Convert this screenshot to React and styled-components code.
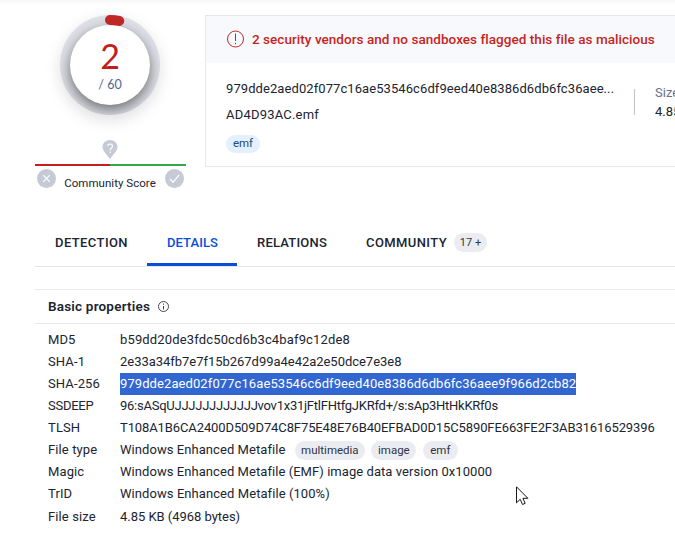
import React from 'react';
import styled, { createGlobalStyle } from 'styled-components';

const GlobalStyle = createGlobalStyle`
  *, *::before, *::after { box-sizing: border-box; }
  body { margin: 0; background: #fff; overflow: hidden; }
`;

const Page = styled.main`
  position: relative;
  width: 675px;
  height: 541px;
  overflow: hidden;
  padding: 15px 0 0 35px;
  background: linear-gradient(#f7f7f7, #fff 5px);
  color: #202430;
  font: 400 13px/22px Roboto, sans-serif;
`;

const Text = styled.span`
  letter-spacing: ${({ $ls = 0 }) => $ls}px;
  white-space: nowrap;
`;

const Summary = styled.section`
  display: flex;
  gap: 19px;
  height: 152px;
`;

const ScoreColumn = styled.div`
  display: flex;
  flex-direction: column;
  align-items: center;
  flex: 0 0 151px;
`;

const Gauge = styled.div`
  position: relative;
  flex: none;
  width: 100px;
  height: 100px;
  margin-right: 1px;
  border-radius: 50%;
  background: #dfe1e8;
  box-shadow: 0 5px 16px rgba(0, 0, 0, 0.13);
`;

const GaugeShade = styled.div`
  display: grid;
  place-items: center;
  width: 100px;
  height: 100px;
  border-radius: 50%;
  overflow: hidden;
`;

const GaugeFace = styled.div`
  display: flex;
  flex-direction: column;
  align-items: center;
  width: 80px;
  height: 80px;
  padding-top: 13px;
  border-radius: 50%;
  background: #fff;
  box-shadow: 0 5px 14px rgba(0, 0, 0, 0.52);
`;

const GaugeArc = styled.svg`
  position: absolute;
  inset: 0;
`;

const Hits = styled.div`
  color: #c41e1c;
  font: 400 34px/36px Lato, sans-serif;
`;

const Total = styled.div`
  margin-top: 3px;
  color: #52648c;
  font: 400 12.5px/16px Lato, sans-serif;
`;

const Pin = styled.svg`
  flex: none;
  margin: 24px 1px 0 0;
`;

const VoteBar = styled.div`
  flex: none;
  width: 151px;
  height: 2px;
  margin-top: 5px;
  background: linear-gradient(90deg, #c4201f 50%, #36a84a 50%);
`;

const Votes = styled.div`
  display: flex;
  justify-content: space-between;
  align-items: flex-start;
  width: 147px;
  margin-right: 1px;
  padding-top: 3px;
  font-size: 11.5px;
`;

const VoteIcon = styled.svg`
  flex: none;
`;

const VoteLabel = styled(Text)`
  margin-top: 3px;
`;

const Card = styled.article`
  flex: 1;
  min-width: 0;
  border: 1px solid #e4e7ef;
  border-right: 0;
  overflow: hidden;
  background: #fff;
`;

const Alert = styled.header`
  display: flex;
  align-items: center;
  gap: 8px;
  height: 47px;
  padding: 0 0 1px 20px;
  background: #f8f9fc;
  color: #c42523;
  font-size: 13.5px;
  font-weight: 500;
`;

const CardBody = styled.div`
  display: flex;
  padding: 15px 0 0 20px;
`;

const FileInfo = styled.div`
  display: flex;
  flex-direction: column;
  align-items: flex-start;
  gap: 4px;
  flex: 0 0 408px;
`;

const SizeBlock = styled.div`
  display: flex;
  align-items: center;
  gap: 20px;
  height: 26px;
  margin-top: 11px;
  border-left: 1px solid #bfc2c8;
  padding-left: 20px;
`;

const SizeText = styled.div`
  display: flex;
  flex-direction: column;
  line-height: 19px;
`;

const Muted = styled(Text)`
  color: #697288;
`;

const Tag = styled.span`
  display: inline-flex;
  align-items: center;
  justify-content: center;
  width: ${({ $w }) => $w}px;
  height: ${({ $blue }) => ($blue ? 18 : 19)}px;
  border-radius: 10px;
  background: ${({ $blue }) => ($blue ? '#e3f1fe' : '#ebecf2')};
  color: ${({ $blue }) => ($blue ? '#25487a' : '#303443')};
  font-size: 11.5px;
  line-height: 17px;
  padding-bottom: ${({ $blue }) => ($blue ? 1 : 0)}px;
  white-space: nowrap;
`;

const FileTag = styled(Tag)`
  margin-top: 5px;
`;

const Tabs = styled.nav`
  display: flex;
  height: 48px;
  margin-top: 52px;
  border-bottom: 1px solid #e3e6ed;
`;

const Tab = styled.a`
  display: flex;
  align-items: center;
  gap: 7px;
  width: ${({ $w }) => $w}px;
  height: 47px;
  padding: 3px 0 0 20px;
  font-weight: 500;
  color: ${({ $active }) => ($active ? '#0b4dda' : '#202430')};
  border-bottom: 3px solid ${({ $active }) => ($active ? '#0b4dda' : 'transparent')};
`;

const CountTag = styled(Tag)`
  font-weight: 400;
  font-size: 11px;
`;

const Panel = styled.section`
  margin-top: 22px;
  border-top: 1px solid #e7e9ee;
`;

const PanelHead = styled.header`
  display: flex;
  align-items: center;
  gap: 8px;
  height: 34px;
  padding-left: 13px;
  border-bottom: 1px solid #e7e9ee;
  font-size: 13.5px;
  line-height: 20px;
  font-weight: 600;
`;

const PanelTitle = styled(Text)`
  padding-bottom: 2px;
`;

const Properties = styled.dl`
  display: flex;
  flex-direction: column;
  margin: 0;
  padding: 5px 0 0 13px;
`;

const Property = styled.div`
  display: grid;
  grid-template-columns: 72px 1fr;
  height: 22px;
  margin-top: ${({ $last }) => ($last ? 1 : 0)}px;
`;

const Value = styled.dd`
  display: flex;
  align-items: center;
  margin: 0;
`;

const Label = styled.dt`
  white-space: nowrap;
`;

const Selected = styled(Text)`
  background: #3267d1;
  color: #fff;
  width: 456px;
`;

const TagList = styled.span`
  display: flex;
  gap: 6.5px;
  margin: 0 0 0 9.5px;
`;

const Cursor = styled.svg`
  position: absolute;
  left: 516px;
  top: 486px;
`;

const properties = [
  { label: 'MD5', value: 'b59dd20de3fdc50cd6b3c4baf9c12de8', ls: 0.15 },
  { label: 'SHA-1', value: '2e33a34fb7e7f15b267d99a4e42a2e50dce7e3e8', ls: -0.03 },
  { label: 'SHA-256', value: '979dde2aed02f077c16ae53546c6df9eed40e8386d6db6fc36aee9f966d2cb82', ls: 0.09, selected: true },
  { label: 'SSDEEP', labelLs: -0.25, value: '96:sASqUJJJJJJJJJJJJvov1x31jFtlFHtfgJKRfd+/s:sAp3HtHkKRf0s', ls: -0.25 },
  { label: 'TLSH', value: 'T108A1B6CA2400D509D74C8F75E48E76B40EFBAD0D15C5890FE663FE2F3AB31616529396', ls: -0.11 },
  { label: 'File type', value: 'Windows Enhanced Metafile', ls: 0.06, tags: [['multimedia', 70], ['image', 45], ['emf', 35]] },
  { label: 'Magic', value: 'Windows Enhanced Metafile (EMF) image data version 0x10000', ls: 0.06 },
  { label: 'TrID', value: 'Windows Enhanced Metafile (100%)', ls: 0.07 },
  { label: 'File size', value: '4.85 KB (4968 bytes)', ls: -0.03 },
];

function DetectionGauge() {
  return (
    <Gauge>
      <GaugeShade>
        <GaugeFace>
          <Hits>2</Hits>
          <Total>/ 60</Total>
        </GaugeFace>
      </GaugeShade>
      <GaugeArc width="100" height="100" viewBox="0 0 100 100" fill="none">
        <path d="M50 5A45 45 0 0 1 59.2 5.9" stroke="#bf2827" strokeWidth="10" strokeLinecap="round" />
      </GaugeArc>
    </Gauge>
  );
}

function CommunityScore() {
  return (
    <>
      <Pin width="16" height="20" viewBox="0 0 16 20" fill="none">
        <path d="M8 1C3.8 1 .5 4.1 .5 8c0 3.7 3.3 6.1 7.5 12 4.2-5.9 7.5-8.3 7.5-12C15.5 4.1 12.2 1 8 1Z" fill="#c6cad6" />
        <path d="M5.7 7.3C5.7 4.2 10.5 4.3 10.5 7.1 10.5 8.9 8.2 9 8.2 11.2M8.2 12.5v1.4" stroke="#fff" strokeWidth="1.2" />
      </Pin>
      <VoteBar />
      <Votes>
        <VoteIcon width="19" height="19" viewBox="0 0 19 19" fill="none">
          <circle cx="9.5" cy="9.5" r="9.5" fill="#c6cad6" />
          <path d="m6.2 6.2 6.6 6.6m0-6.6-6.6 6.6" stroke="#fff" strokeWidth="1.2" />
        </VoteIcon>
        <VoteLabel $ls={0.04}>Community Score</VoteLabel>
        <VoteIcon width="19" height="19" viewBox="0 0 19 19" fill="none">
          <circle cx="9.5" cy="9.5" r="9.5" fill="#c6cad6" />
          <path d="m5 10 3.2 3.2 6-7.4" stroke="#fff" strokeWidth="1.2" />
        </VoteIcon>
      </Votes>
    </>
  );
}

export default function App() {
  return (
    <>
      <GlobalStyle />
      <Page>
        <Summary>
          <ScoreColumn>
            <DetectionGauge />
            <CommunityScore />
          </ScoreColumn>
          <Card>
            <Alert>
              <svg width="18" height="18" viewBox="0 0 18 18" fill="none" stroke="#c42523">
                <circle cx="9.5" cy="9" r="8" />
                <path d="M9.5 3.5V11M9.5 12.8v1.4" />
              </svg>
              <Text $ls={0.04}>2 security vendors and no sandboxes flagged this file as malicious</Text>
            </Alert>
            <CardBody>
              <FileInfo>
                <Text $ls={0.08}>979dde2aed02f077c16ae53546c6df9eed40e8386d6db6fc36aee...</Text>
                <Text $ls={0.2}>AD4D93AC.emf</Text>
                <FileTag $blue $w={34}>emf</FileTag>
              </FileInfo>
              <SizeBlock>
                <SizeText>
                  <Muted>Size</Muted>
                  <Text>4.85 KB</Text>
                </SizeText>
              </SizeBlock>
            </CardBody>
          </Card>
        </Summary>

        <Tabs>
          <Tab $w={112}><Text $ls={0.41}>DETECTION</Text></Tab>
          <Tab $w={90} $active><Text $ls={0.07}>DETAILS</Text></Tab>
          <Tab $w={109}><Text $ls={0.21}>RELATIONS</Text></Tab>
          <Tab $w={160}>
            <Text $ls={0.4}>COMMUNITY</Text>
            <CountTag $w={33}>17 +</CountTag>
          </Tab>
        </Tabs>

        <Panel>
          <PanelHead>
            <PanelTitle $ls={0.2}>Basic properties</PanelTitle>
            <svg width="11" height="11" viewBox="0 0 11 11" fill="none" stroke="#444853">
              <circle cx="5.5" cy="5.5" r="5" />
              <path d="M5.5 5v3.5M5.5 2.5v1.3" />
            </svg>
          </PanelHead>
          <Properties>
            {properties.map(({ label, labelLs, value, ls, selected, tags }, i) => (
              <Property key={label} $last={i === properties.length - 1}>
                <Label><Text $ls={labelLs ?? 0.12}>{label}</Text></Label>
                <Value>
                  {selected ? <Selected $ls={ls}>{value}</Selected> : <Text $ls={ls}>{value}</Text>}
                  {tags && (
                    <TagList>
                      {tags.map(([name, w]) => <Tag key={name} $w={w}>{name}</Tag>)}
                    </TagList>
                  )}
                </Value>
              </Property>
            ))}
          </Properties>
        </Panel>

        <Cursor width="13" height="20" viewBox="0 0 13 20">
          <path d="M.5.8v16l3.7-3.5 2.3 5.2 2.7-1.2-2.3-5h5Z" fill="#fff" stroke="#15151f" />
        </Cursor>
      </Page>
    </>
  );
}
